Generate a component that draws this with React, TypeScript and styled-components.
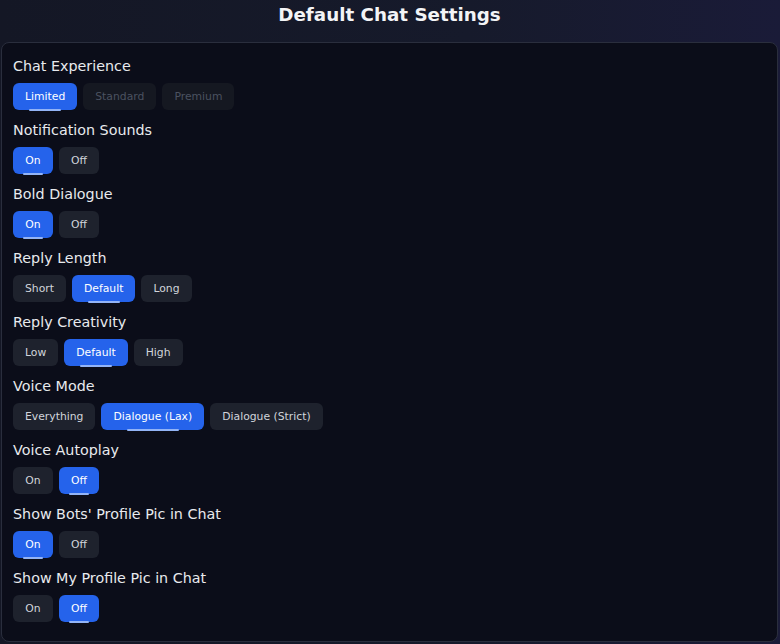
import React, { useState } from "react";
import styled, { createGlobalStyle, css } from "styled-components";

const Global = createGlobalStyle`
  html, body { margin: 0; padding: 0; }
  body {
    background: linear-gradient(90deg, #141725 0%, #161a2b 60%, #1a1b38 100%);
    font-family: "DejaVu Sans", "Noto Sans", sans-serif;
    min-height: 644px;
  }
`;

const Page = styled.div`
  display: flex;
  flex-direction: column;
  padding: 4px 2px 2px 1px;
  height: 644px;
  box-sizing: border-box;
`;

const Title = styled.h1`
  margin: 0 0 17px;
  text-align: center;
  font-size: 18.3px;
  font-weight: 700;
  color: #f3f4f6;
  line-height: 21px;
`;

const Panel = styled.section`
  flex: 1;
  display: flex;
  flex-direction: column;
  gap: 12.5px;
  padding: 15px 11px 18px;
  background: #0b0d19;
  border: 1px solid #2a2e3d;
  border-radius: 8px;
`;

const Group = styled.div`
  display: flex;
  flex-direction: column;
`;

const Label = styled.div`
  font-size: 14.3px;
  line-height: 16.5px;
  color: #e8eaee;
  margin-bottom: 8px;
`;

const Options = styled.div`
  display: flex;
  gap: 6px;
`;

const Option = styled.button<{ $active?: boolean; $disabled?: boolean }>`
  position: relative;
  min-width: 40px;
  height: 27px;
  padding: 0 12px;
  border: none;
  border-radius: 6px;
  font-family: "DejaVu Sans", sans-serif;
  font-size: 10.8px;
  cursor: pointer;
  background: #1e222d;
  color: #d1d5db;
  ${(p) =>
    p.$disabled &&
    css`
      background: #151821;
      color: #4b5260;
    `}
  ${(p) =>
    p.$active &&
    css`
      background: #2563eb;
      color: #ffffff;
      &::after {
        content: "";
        position: absolute;
        left: 25%;
        right: 25%;
        bottom: -1px;
        height: 2px;
        border-radius: 1px;
        background: #93b4f6;
      }
    `}
`;

type Setting = { label: string; options: string[]; value: string; disabled?: string[] };

const initial: Setting[] = [
  { label: "Chat Experience", options: ["Limited", "Standard", "Premium"], value: "Limited", disabled: ["Standard", "Premium"] },
  { label: "Notification Sounds", options: ["On", "Off"], value: "On" },
  { label: "Bold Dialogue", options: ["On", "Off"], value: "On" },
  { label: "Reply Length", options: ["Short", "Default", "Long"], value: "Default" },
  { label: "Reply Creativity", options: ["Low", "Default", "High"], value: "Default" },
  { label: "Voice Mode", options: ["Everything", "Dialogue (Lax)", "Dialogue (Strict)"], value: "Dialogue (Lax)" },
  { label: "Voice Autoplay", options: ["On", "Off"], value: "Off" },
  { label: "Show Bots' Profile Pic in Chat", options: ["On", "Off"], value: "On" },
  { label: "Show My Profile Pic in Chat", options: ["On", "Off"], value: "Off" },
];

export default function App() {
  const [settings, setSettings] = useState(initial);
  const choose = (i: number, v: string) =>
    setSettings((s) => s.map((x, j) => (j === i ? { ...x, value: v } : x)));
  return (
    <>
      <Global />
      <Page>
        <Title>Default Chat Settings</Title>
        <Panel>
          {settings.map((s, i) => (
            <Group key={s.label}>
              <Label>{s.label}</Label>
              <Options>
                {s.options.map((o) => {
                  const dis = s.disabled?.includes(o);
                  return (
                    <Option
                      key={o}
                      $active={s.value === o}
                      $disabled={dis}
                      onClick={() => !dis && choose(i, o)}
                    >
                      {o}
                    </Option>
                  );
                })}
              </Options>
            </Group>
          ))}
        </Panel>
      </Page>
    </>
  );
}
